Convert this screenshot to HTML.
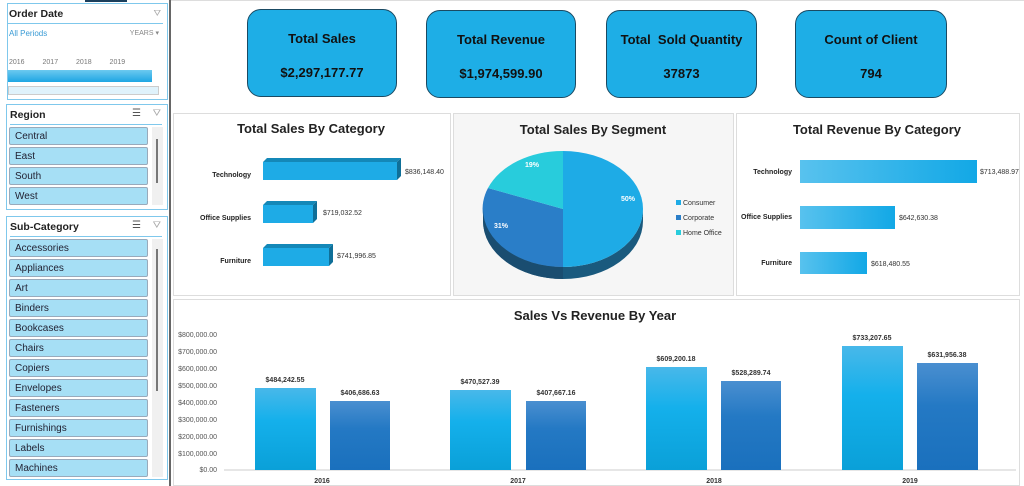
<!DOCTYPE html>
<html><head><meta charset="utf-8"><style>
*{margin:0;padding:0;box-sizing:border-box}
body{width:1024px;height:486px;overflow:hidden;background:#fff;font-family:"Liberation Sans",sans-serif;position:relative}
.a{position:absolute}
.sl{position:absolute;border:1px solid #7fc8ec;background:#fff}
.st{position:absolute;left:3px;top:4px;font-size:10.5px;font-weight:bold;color:#222}
.hl{position:absolute;left:3px;right:5px;height:1px;background:#7fc8ec}
.it{position:absolute;left:2px;width:139px;height:18px;background:#a6dff5;border:1px solid #9ab;border-radius:2px;font-size:10px;color:#223;padding:3px 0 0 5px}
.sb{position:absolute;width:11px;background:#f0f0f0}
.sb i{position:absolute;left:4px;width:2px;background:#777}
.card{position:absolute;background:#1eaee6;border:1px solid #1a4a63;border-radius:14px;text-align:center;font-weight:bold;color:#111}
.card .t{position:absolute;top:21px;width:100%;font-size:13px}
.card .v{position:absolute;top:55px;width:100%;font-size:13px}
.pn{position:absolute;border:1px solid #ddd;background:#fff}
</style></head><body>
<div class="a" style="left:85px;top:0;width:42px;height:2px;background:#1b3f5c"></div>
<div class="a" style="left:169px;top:0;width:2px;height:486px;background:#666"></div>
<div class="a" style="left:171px;top:0;width:853px;height:1px;background:#ddd"></div>

<div class="sl" style="left:7px;top:3px;width:161px;height:97px">
 <div class="st" style="left:1px">Order Date</div>
 <div class="a" style="right:6px;top:4px;font-size:9px;color:#aaa">⛛</div>
 <div class="hl" style="top:19px;left:0;right:4px"></div>
 <div class="a" style="left:1px;top:25px;font-size:8px;color:#3a9bd5">All Periods</div>
 <div class="a" style="right:8px;top:25px;font-size:7px;color:#888">YEARS ▾</div>
 <div class="a" style="left:1px;top:55px;font-size:7px;color:#777;word-spacing:16px">2016 2017 2018 2019</div>
 <div class="a" style="left:0;top:66px;width:144px;height:12px;background:linear-gradient(#6cc9f0,#1ea6e3)"></div>
 <div class="a" style="left:0;top:82px;width:151px;height:9px;background:#dff2fb;border:1px solid #ccc"></div>
</div>

<div class="sl" style="left:6px;top:104px;width:162px;height:106px">
 <div class="st">Region</div>
 <div class="a" style="right:26px;top:3px;font-size:10px;color:#555">☰</div>
 <div class="a" style="right:6px;top:3px;font-size:10px;color:#aaa">⛛</div>
 <div class="hl" style="top:19px"></div>
 <div class="it" style="top:22px">Central</div>
 <div class="it" style="top:42px">East</div>
 <div class="it" style="top:62px">South</div>
 <div class="it" style="top:82px">West</div>
 <div class="sb" style="left:145px;top:22px;height:78px"><i style="top:12px;height:44px"></i></div>
</div>

<div class="sl" style="left:6px;top:216px;width:162px;height:264px">
 <div class="st">Sub-Category</div>
 <div class="a" style="right:26px;top:3px;font-size:10px;color:#555">☰</div>
 <div class="a" style="right:6px;top:3px;font-size:10px;color:#aaa">⛛</div>
 <div class="hl" style="top:19px"></div>
 <div class="it" style="top:22px">Accessories</div>
 <div class="it" style="top:42px">Appliances</div>
 <div class="it" style="top:62px">Art</div>
 <div class="it" style="top:82px">Binders</div>
 <div class="it" style="top:102px">Bookcases</div>
 <div class="it" style="top:122px">Chairs</div>
 <div class="it" style="top:142px">Copiers</div>
 <div class="it" style="top:162px">Envelopes</div>
 <div class="it" style="top:182px">Fasteners</div>
 <div class="it" style="top:202px">Furnishings</div>
 <div class="it" style="top:222px">Labels</div>
 <div class="it" style="top:242px">Machines</div>
 <div class="sb" style="left:145px;top:22px;height:238px"><i style="top:10px;height:142px"></i></div>
</div>

<div class="card" style="left:247px;top:9px;width:150px;height:88px"><div class="t">Total Sales</div><div class="v">$2,297,177.77</div></div>
<div class="card" style="left:426px;top:10px;width:150px;height:88px"><div class="t">Total Revenue</div><div class="v">$1,974,599.90</div></div>
<div class="card" style="left:606px;top:10px;width:151px;height:88px"><div class="t">Total&nbsp; Sold Quantity</div><div class="v">37873</div></div>
<div class="card" style="left:795px;top:10px;width:152px;height:88px"><div class="t">Count of Client</div><div class="v">794</div></div>

<div class="pn" style="left:173px;top:113px;width:278px;height:183px"></div>
<div class="pn" style="left:453px;top:113px;width:281px;height:183px;background:#f6f6f6"></div>
<div class="pn" style="left:736px;top:113px;width:284px;height:183px"></div>
<div class="pn" style="left:173px;top:299px;width:847px;height:187px"></div>

<svg class="a" style="left:0;top:0" width="1024" height="486" font-family="Liberation Sans, sans-serif">
<defs>
<linearGradient id="g1" x1="0" y1="0" x2="0" y2="1"><stop offset="0" stop-color="#48b8ea"/><stop offset="0.4" stop-color="#14b0eb"/><stop offset="1" stop-color="#0aa0d8"/></linearGradient>
<linearGradient id="g2" x1="0" y1="0" x2="0" y2="1"><stop offset="0" stop-color="#4a8fd0"/><stop offset="0.4" stop-color="#2479c4"/><stop offset="1" stop-color="#1a70bd"/></linearGradient>
<linearGradient id="g3" x1="0" y1="0" x2="1" y2="0"><stop offset="0" stop-color="#58c2ee"/><stop offset="1" stop-color="#12a8e6"/></linearGradient>
</defs>
<g font-weight="bold" font-size="13" fill="#222" text-anchor="middle">
<text x="311" y="133">Total Sales By Category</text>
<text x="593" y="134">Total Sales By Segment</text>
<text x="877" y="134">Total Revenue By Category</text>
<text x="595" y="320">Sales Vs Revenue By Year</text>
</g>
<g font-size="7" font-weight="bold" fill="#222" text-anchor="end">
<text x="251" y="177">Technology</text><text x="251" y="220">Office Supplies</text><text x="251" y="263">Furniture</text></g>
<g>
<polygon points="263,162 267,158 401,158 397,162" fill="#1488b8"/><rect x="263" y="162" width="134" height="18" fill="#1eabe6"/><polygon points="397,162 401,158 401,176 397,180" fill="#0f6f98"/>
<polygon points="263,205 267,201 317,201 313,205" fill="#1488b8"/><rect x="263" y="205" width="50" height="18" fill="#1eabe6"/><polygon points="313,205 317,201 317,219 313,223" fill="#0f6f98"/>
<polygon points="263,248 267,244 333,244 329,248" fill="#1488b8"/><rect x="263" y="248" width="66" height="18" fill="#1eabe6"/><polygon points="329,248 333,244 333,262 329,266" fill="#0f6f98"/>
</g>
<g font-size="7" fill="#333"><text x="405" y="174">$836,148.40</text><text x="323" y="215">$719,032.52</text><text x="337" y="258">$741,996.85</text></g>
<path d="M483,209 A80,58 0 0 0 643,209 L643,221 A80,58 0 0 1 483,221 Z" fill="#1a5a7e"/>
<path d="M563,209 L563,151 A80,58 0 0 1 563,267 Z" fill="#1eabe6"/>
<path d="M563,209 L563,267 A80,58 0 0 1 488,188 Z" fill="#2a7ec8"/>
<path d="M563,209 L488,188 A80,58 0 0 1 563,151 Z" fill="#28ccdc"/>
<path d="M563,267 L563,279 A80,58 0 0 1 483,221 L483,209 A80,58 0 0 0 563,267Z" fill="#1a4d70"/>
<g font-size="7" font-weight="bold" fill="#fff"><text x="525" y="167">19%</text><text x="494" y="228">31%</text><text x="621" y="201">50%</text></g>
<g font-size="7" fill="#333"><rect x="676" y="200" width="5" height="5" fill="#1eabe6"/><text x="683" y="205">Consumer</text>
<rect x="676" y="215" width="5" height="5" fill="#2a7ec8"/><text x="683" y="220">Corporate</text>
<rect x="676" y="230" width="5" height="5" fill="#28ccdc"/><text x="683" y="235">Home Office</text></g>
<g font-size="7" font-weight="bold" fill="#222" text-anchor="end"><text x="792" y="174">Technology</text><text x="792" y="219">Office Supplies</text><text x="792" y="265">Furniture</text></g>
<rect x="800" y="160" width="177" height="23" fill="url(#g3)"/>
<rect x="800" y="206" width="95" height="23" fill="url(#g3)"/>
<rect x="800" y="252" width="67" height="22" fill="url(#g3)"/>
<g font-size="7" fill="#333"><text x="980" y="174">$713,488.97</text><text x="899" y="220">$642,630.38</text><text x="871" y="266">$618,480.55</text></g>
<g font-size="7" fill="#555" text-anchor="end">
<text x="217" y="337">$800,000.00</text><text x="217" y="354">$700,000.00</text><text x="217" y="371">$600,000.00</text><text x="217" y="388">$500,000.00</text><text x="217" y="405">$400,000.00</text><text x="217" y="422">$300,000.00</text><text x="217" y="439">$200,000.00</text><text x="217" y="456">$100,000.00</text><text x="217" y="472">$0.00</text></g>
<line x1="224" y1="470" x2="1016" y2="470" stroke="#ccc"/>
<rect x="255" y="388" width="61" height="82" fill="url(#g1)"/><rect x="330" y="401" width="60" height="69" fill="url(#g2)"/>
<rect x="450" y="390" width="61" height="80" fill="url(#g1)"/><rect x="526" y="401" width="60" height="69" fill="url(#g2)"/>
<rect x="646" y="367" width="61" height="103" fill="url(#g1)"/><rect x="721" y="381" width="60" height="89" fill="url(#g2)"/>
<rect x="842" y="346" width="61" height="124" fill="url(#g1)"/><rect x="917" y="363" width="61" height="107" fill="url(#g2)"/>
<g font-size="7" font-weight="bold" fill="#333" text-anchor="middle">
<text x="285" y="382">$484,242.55</text><text x="360" y="395">$406,686.63</text>
<text x="480" y="384">$470,527.39</text><text x="556" y="395">$407,667.16</text>
<text x="676" y="361">$609,200.18</text><text x="751" y="375">$528,289.74</text>
<text x="872" y="340">$733,207.65</text><text x="947" y="357">$631,956.38</text>
<text x="322" y="483">2016</text><text x="518" y="483">2017</text><text x="714" y="483">2018</text><text x="910" y="483">2019</text></g>
</svg>
</body></html>
